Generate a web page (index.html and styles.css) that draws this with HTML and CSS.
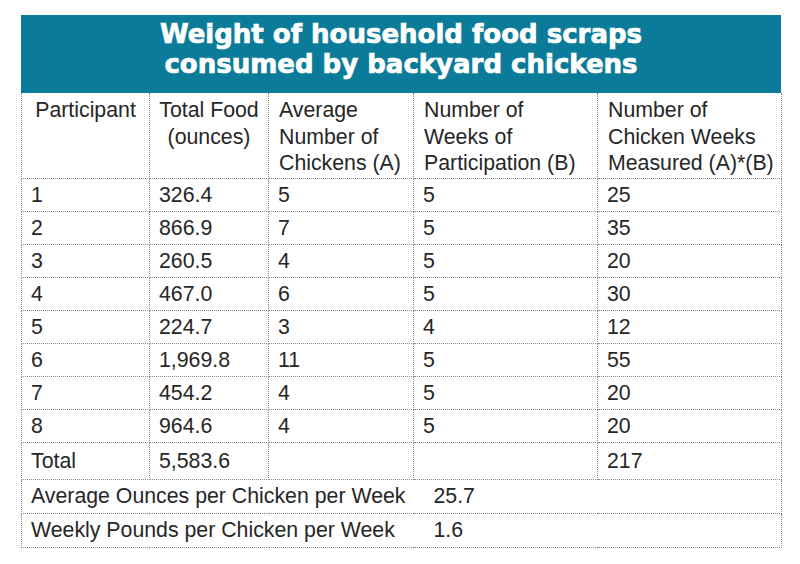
FILE: index.html
```html
<!DOCTYPE html>
<html lang="en">
<head>
<meta charset="utf-8">
<title>Weight of household food scraps consumed by backyard chickens</title>
<link rel="stylesheet" href="styles.css">
</head>
<body>
<div class="sheet">
  <div class="title">Weight of household food scraps<br>consumed by backyard chickens</div>
  <table class="data">
    <colgroup>
      <col class="c1"><col class="c2"><col class="c3"><col class="c4"><col class="c5">
    </colgroup>
    <thead>
      <tr class="head">
        <th class="center">Participant</th>
        <th class="center">Total Food<br>(ounces)</th>
        <th>Average<br>Number of<br>Chickens (A)</th>
        <th>Number of<br>Weeks of<br>Participation (B)</th>
        <th>Number of<br>Chicken Weeks<br>Measured (A)*(B)</th>
      </tr>
    </thead>
    <tbody>
      <tr><td>1</td><td>326.4</td><td>5</td><td>5</td><td>25</td></tr>
      <tr><td>2</td><td>866.9</td><td>7</td><td>5</td><td>35</td></tr>
      <tr><td>3</td><td>260.5</td><td>4</td><td>5</td><td>20</td></tr>
      <tr><td>4</td><td>467.0</td><td>6</td><td>5</td><td>30</td></tr>
      <tr><td>5</td><td>224.7</td><td>3</td><td>4</td><td>12</td></tr>
      <tr><td>6</td><td>1,969.8</td><td>11</td><td>5</td><td>55</td></tr>
      <tr><td>7</td><td>454.2</td><td>4</td><td>5</td><td>20</td></tr>
      <tr><td>8</td><td>964.6</td><td>4</td><td>5</td><td>20</td></tr>
      <tr class="total"><td>Total</td><td>5,583.6</td><td></td><td></td><td>217</td></tr>
      <tr class="summary"><td colspan="3" class="label">Average Ounces per Chicken per Week</td><td colspan="2" class="value">25.7</td></tr>
      <tr class="summary"><td colspan="3" class="label">Weekly Pounds per Chicken per Week</td><td colspan="2" class="value">1.6</td></tr>
    </tbody>
  </table>
</div>
</body>
</html>
```
FILE: styles.css
```css
html, body {
  margin: 0;
  padding: 0;
  background: #ffffff;
}

.sheet {
  width: 760px;
  padding: 15px 19px 0 21px;
}

.title {
  background: #0b7b9a;
  color: #ffffff;
  font-family: "DejaVu Sans", "Liberation Sans", sans-serif;
  font-weight: bold;
  font-size: 26px;
  line-height: 30px;
  text-align: center;
  height: 60px;
  padding: 4px 0 14px;
  -webkit-text-stroke: 0.7px #ffffff;
}

.data {
  width: 760px;
  table-layout: fixed;
  border-collapse: collapse;
  font-family: "Liberation Sans", Arial, sans-serif;
  font-size: 21.3px;
  color: #262626;
}

.c1 { width: 128px; }
.c2 { width: 119px; }
.c3 { width: 145px; }
.c4 { width: 184px; }
.c5 { width: 184px; }

.data th,
.data td {
  border: 1px dotted #8a8a8a;
  padding: 0 10px;
  text-align: left;
  font-weight: normal;
  white-space: nowrap;
}

.data th {
  border-top: none;
  vertical-align: top;
  line-height: 26.5px;
  padding-top: 4px;
  padding-bottom: 1px;
  height: 79px;
}

.data th.center {
  text-align: center;
  padding-left: 0;
  padding-right: 0;
}

.data td {
  height: 32px;
  line-height: 24px;
  vertical-align: middle;
  padding-left: 9px;
}

.data tr.total td {
  height: 36px;
}

.data tr.summary td {
  height: 33px;
}

.data td.label {
  padding-left: 9px;
  border-right: none;
}

.data td.value {
  border-left: none;
  padding-left: 20px;
}
```
